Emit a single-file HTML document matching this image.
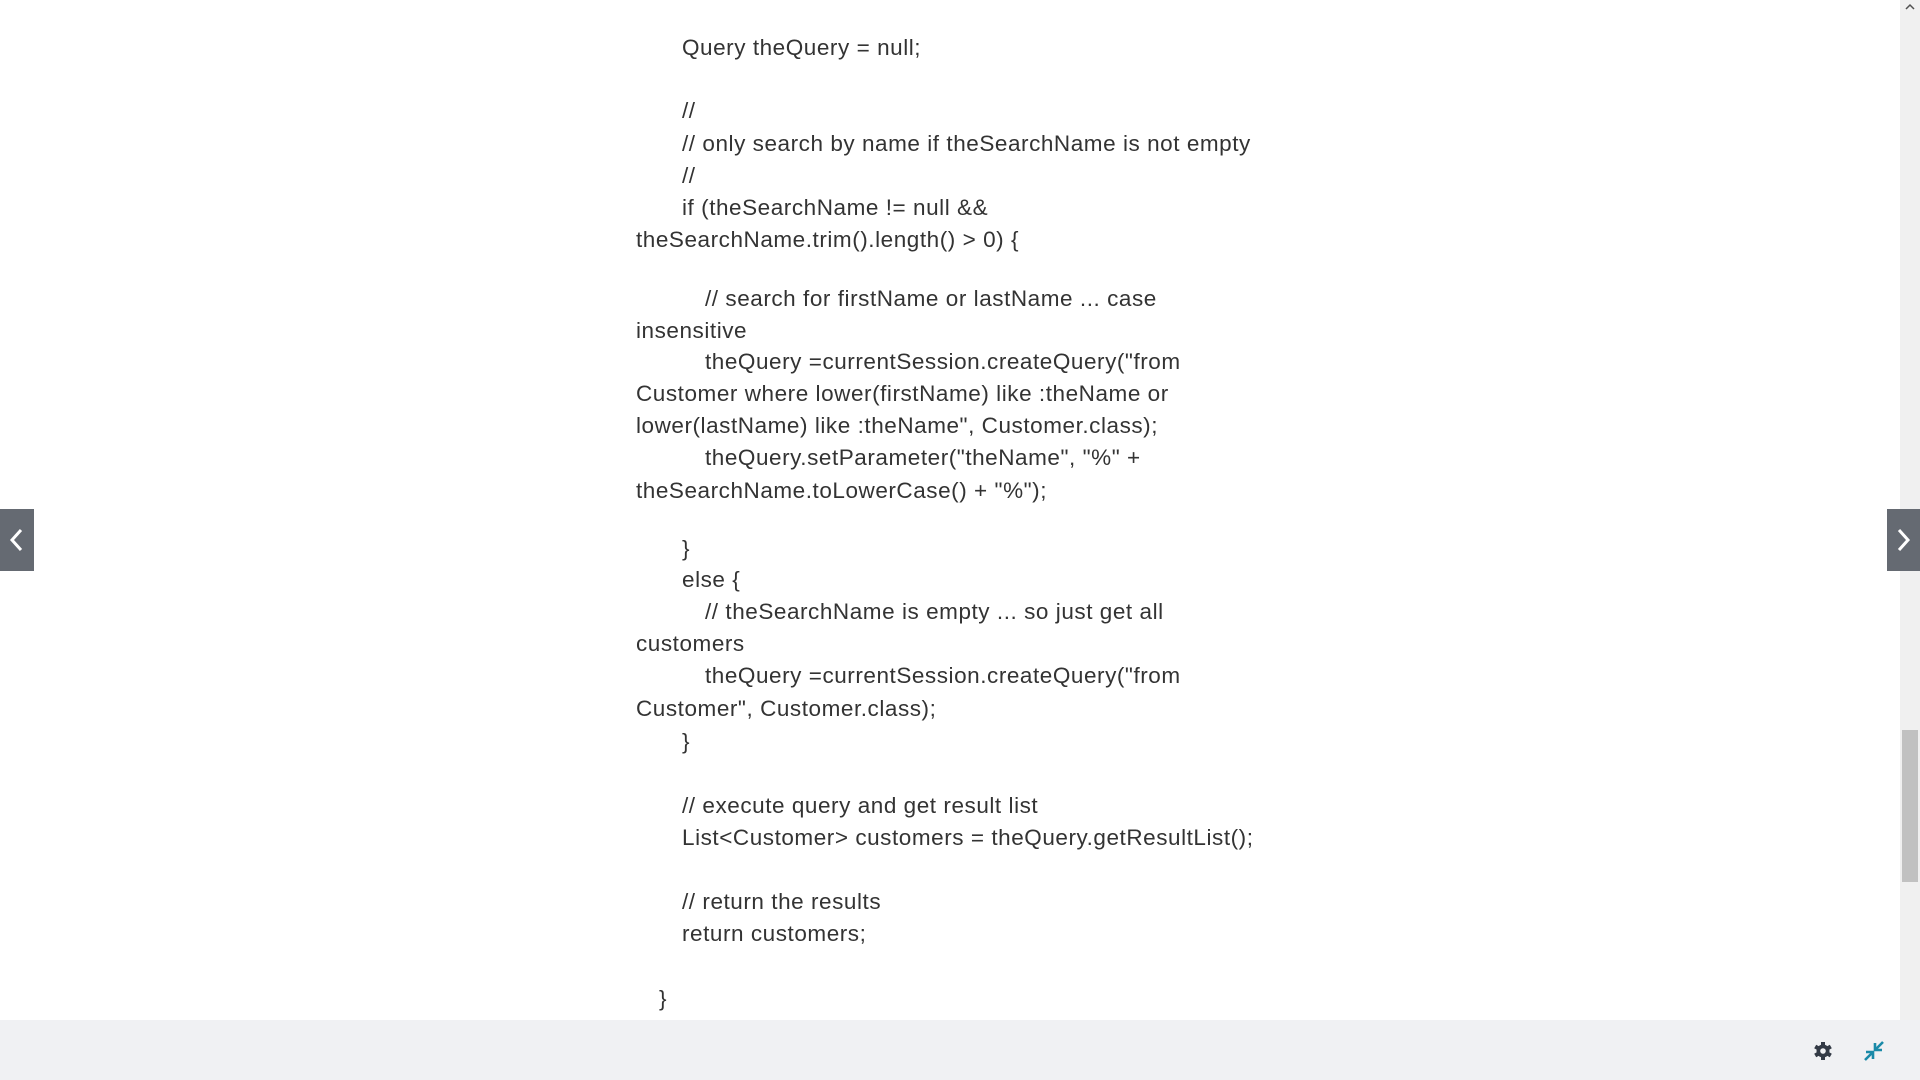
<!DOCTYPE html>
<html><head><meta charset="utf-8"><style>
body{margin:0;width:1920px;height:1080px;overflow:hidden;background:#fff;position:relative;font-family:"Liberation Sans",sans-serif;}
.l{position:absolute;font-size:22.5px;letter-spacing:0.55px;line-height:32px;color:#333;white-space:pre;}
</style></head><body>
<div class="l" style="left:682px;top:32px">Query theQuery = null;</div>
<div class="l" style="left:682px;top:95px">//</div>
<div class="l" style="left:682px;top:128px">// only search by name if theSearchName is not empty</div>
<div class="l" style="left:682px;top:160px">//</div>
<div class="l" style="left:682px;top:192px">if (theSearchName != null &amp;&amp;</div>
<div class="l" style="left:636px;top:224px">theSearchName.trim().length() &gt; 0) {</div>
<div class="l" style="left:705px;top:283px">// search for firstName or lastName ... case</div>
<div class="l" style="left:636px;top:315px">insensitive</div>
<div class="l" style="left:705px;top:346px">theQuery =currentSession.createQuery("from</div>
<div class="l" style="left:636px;top:378px">Customer where lower(firstName) like :theName or</div>
<div class="l" style="left:636px;top:410px">lower(lastName) like :theName", Customer.class);</div>
<div class="l" style="left:705px;top:442px">theQuery.setParameter("theName", "%" +</div>
<div class="l" style="left:636px;top:475px">theSearchName.toLowerCase() + "%");</div>
<div class="l" style="left:682px;top:533px">}</div>
<div class="l" style="left:682px;top:564px">else {</div>
<div class="l" style="left:705px;top:596px">// theSearchName is empty ... so just get all</div>
<div class="l" style="left:636px;top:628px">customers</div>
<div class="l" style="left:705px;top:660px">theQuery =currentSession.createQuery("from</div>
<div class="l" style="left:636px;top:693px">Customer", Customer.class);</div>
<div class="l" style="left:682px;top:726px">}</div>
<div class="l" style="left:682px;top:790px">// execute query and get result list</div>
<div class="l" style="left:682px;top:822px">List&lt;Customer&gt; customers = theQuery.getResultList();</div>
<div class="l" style="left:682px;top:886px">// return the results</div>
<div class="l" style="left:682px;top:918px">return customers;</div>
<div class="l" style="left:659px;top:983px">}</div>

<div style="position:absolute;left:1900px;top:0;width:20px;height:1020px;background:#f0f0f0"></div>
<div style="position:absolute;left:1902px;top:730px;width:16px;height:152px;background:#c1c1c1"></div>
<svg style="position:absolute;left:1904px;top:2px" width="12" height="10"><path d="M2 7 L6 3 L10 7" stroke="#505050" stroke-width="1.5" fill="none"/></svg>

<div style="position:absolute;left:0;top:509px;width:34px;height:62px;background:#656a72"></div>
<svg style="position:absolute;left:0;top:509px" width="34" height="62"><path d="M21 21 L12 31 L21 41" stroke="#fff" stroke-width="3" fill="none"/></svg>
<div style="position:absolute;left:1887px;top:509px;width:33px;height:62px;background:#656a72"></div>
<svg style="position:absolute;left:1887px;top:509px" width="33" height="62"><path d="M12 21 L21 31 L12 41" stroke="#fff" stroke-width="3" fill="none"/></svg>

<div style="position:absolute;left:0;top:1020px;width:1920px;height:60px;background:#f0f1f3"></div>
<svg style="position:absolute;left:1813px;top:1041px" width="20" height="20" viewBox="0 0 20 20">
<g fill="#333a45"><circle cx="10" cy="10" r="6.5"/>
<rect x="8" y="1" width="4" height="18"/><rect x="8" y="1" width="4" height="18" transform="rotate(60 10 10)"/><rect x="8" y="1" width="4" height="18" transform="rotate(120 10 10)"/></g>
<circle cx="10" cy="10" r="2.8" fill="#f0f1f3"/></svg>
<svg style="position:absolute;left:1863px;top:1040px" width="22" height="22" viewBox="0 0 22 22">
<g stroke="#1a8aa8" stroke-width="2.6" fill="none"><path d="M20 2 L13 9"/><path d="M12 3 V10 H19"/><path d="M2 20 L9 13"/><path d="M3 12 H10 V19"/></g></svg>
</body></html>
